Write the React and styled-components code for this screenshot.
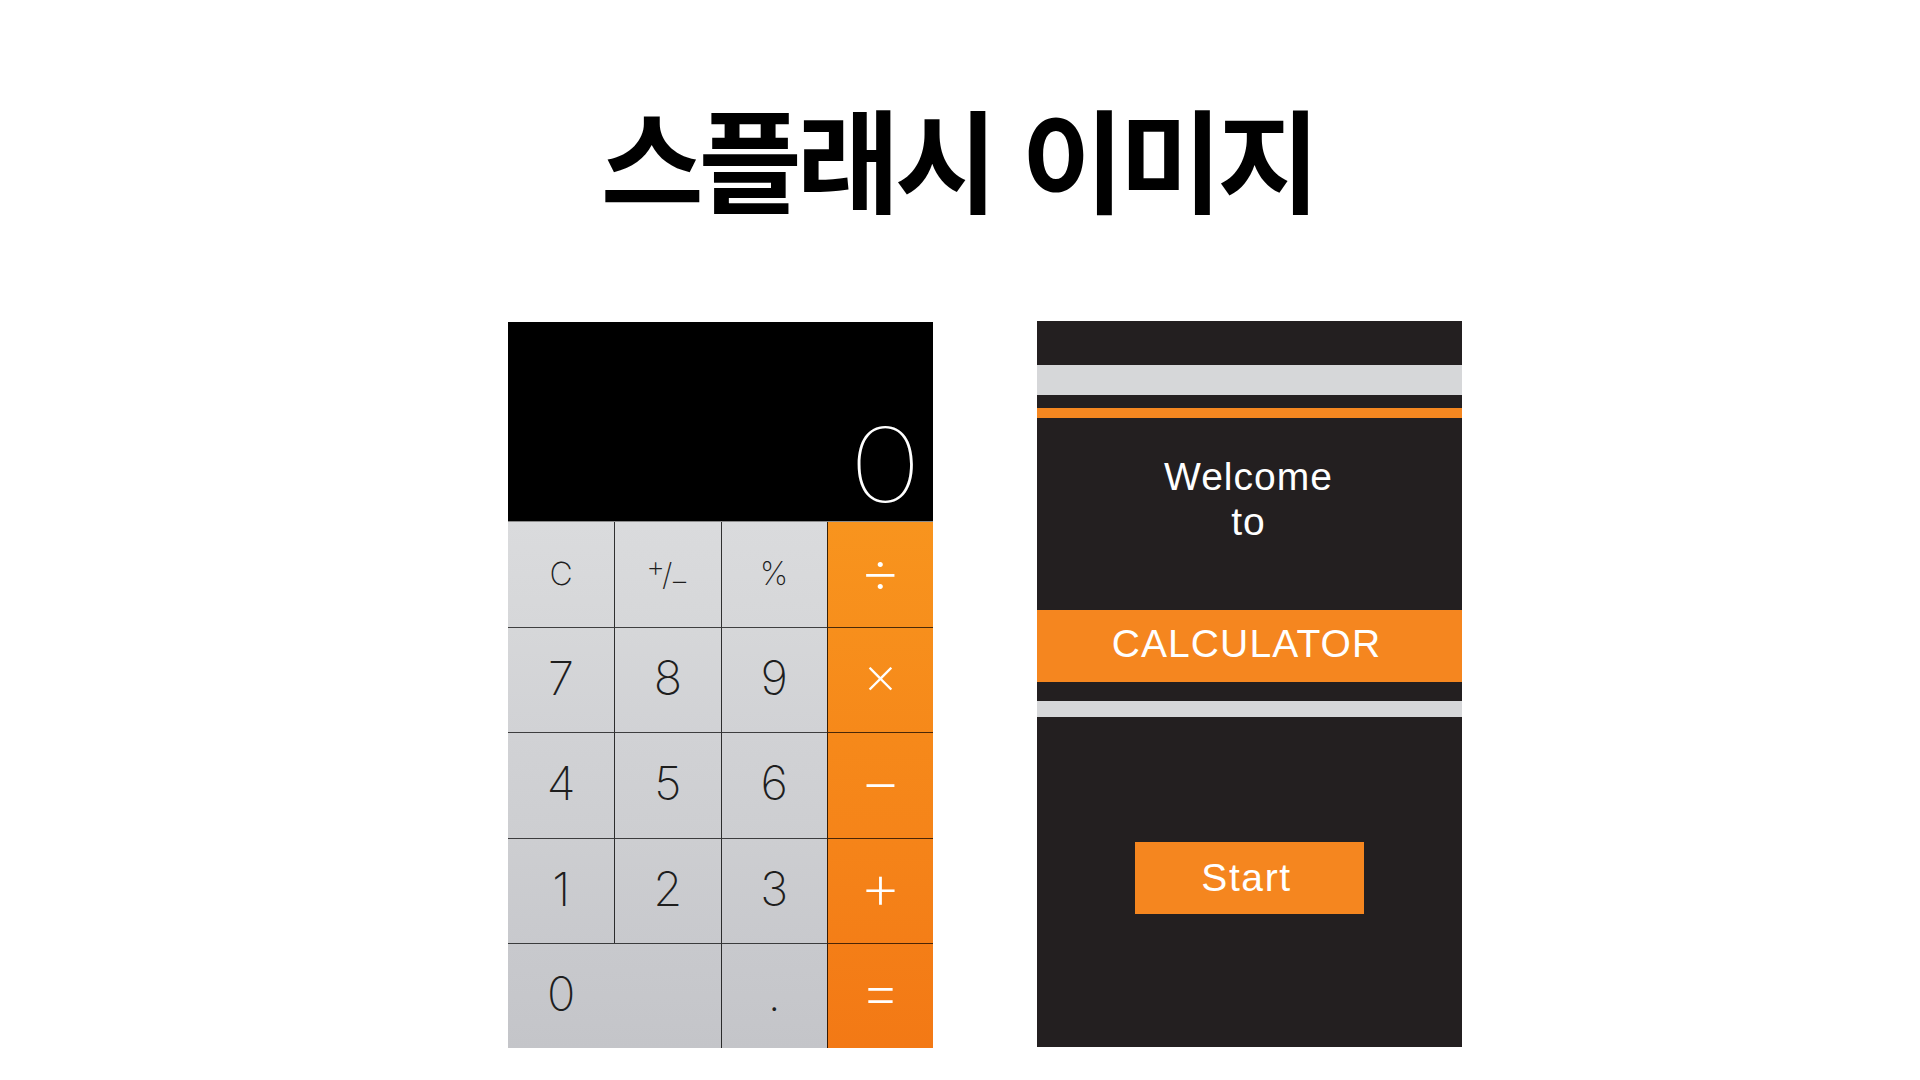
import React from "react";
import styled, { createGlobalStyle } from "styled-components";

const GRAY_TOP = [218, 219, 221];
const GRAY_BOTTOM = [196, 197, 201];
const ORANGE_TOP = [248, 148, 30];
const ORANGE_BOTTOM = [243, 121, 21];

const mix = (a, b, t) =>
  `rgb(${a.map((v, i) => Math.round(v + (b[i] - v) * t)).join(",")})`;

// each key gets its own slice of the one big gradient of the keypad
const keyBackground = (row, op) => {
  const [top, bottom] = op ? [ORANGE_TOP, ORANGE_BOTTOM] : [GRAY_TOP, GRAY_BOTTOM];
  return `linear-gradient(to bottom, ${mix(top, bottom, row / 5)}, ${mix(
    top,
    bottom,
    (row + 1) / 5
  )})`;
};

// big glyphs sit a little low in their line box, lift them back to the middle
const keyLift = (p) => (p.$op ? 10 : p.$size ? 1 : 5);

const KEYS = [
  [
    { label: "C", size: 32 },
    { label: "+/-", size: 30 },
    { label: "%", size: 32 },
    { label: "÷", op: true, size: 66 },
  ],
  [{ label: "7" }, { label: "8" }, { label: "9" }, { label: "×", op: true, size: 54 }],
  [{ label: "4" }, { label: "5" }, { label: "6" }, { label: "−", op: true, size: 65 }],
  [{ label: "1" }, { label: "2" }, { label: "3" }, { label: "+", op: true, size: 65 }],
  [{ label: "0", span: 2 }, { label: "." }, { label: "=", op: true, size: 65 }],
];

export default function App() {
  return (
    <>
      <GlobalStyle />
      <Page>
        <Title>스플래시 이미지</Title>
        <Screens>
          <Calculator>
            <Display>
              <Readout>0</Readout>
            </Display>
            <Keypad>
              {KEYS.map((row, r) => {
                let col = 0;
                return row.map((key) => {
                  const c = col;
                  col += key.span || 1;
                  return (
                    <Key
                      key={`${r}-${c}`}
                      $row={r}
                      $col={c}
                      $span={key.span}
                      $op={key.op}
                      $size={key.size}
                    >
                      {key.label === "+/-" ? (
                        <PlusMinus>
                          <Raised>+</Raised>
                          <Slash>/</Slash>
                          <Lowered>−</Lowered>
                        </PlusMinus>
                      ) : (
                        key.label
                      )}
                    </Key>
                  );
                });
              })}
            </Keypad>
          </Calculator>

          <Splash>
            <Stripe $h={30} $color="#d6d7d9" />
            <Stripe $h={10} $mt={13} $color="#f58720" />
            <Welcome>
              Welcome
              <br />
              to
            </Welcome>
            <Band>CALCULATOR</Band>
            <Stripe $h={16} $mt={19} $color="#d6d7d9" />
            <StartButton>Start</StartButton>
          </Splash>
        </Screens>
      </Page>
    </>
  );
}

const GlobalStyle = createGlobalStyle`
  html, body {
    margin: 0;
    padding: 0;
    background: #fff;
  }
  body {
    font-family: "Liberation Sans", Arial, sans-serif;
  }
`;

const Page = styled.div`
  width: 1920px;
  height: 1080px;
  box-sizing: border-box;
  padding-top: 100px;
  display: flex;
  flex-direction: column;
  align-items: center;
  overflow: hidden;
`;

const Title = styled.h1`
  margin: 0;
  padding-right: 4px;
  font-family: "Noto Sans CJK KR", "Noto Sans", sans-serif;
  font-weight: 700;
  font-size: 112px;
  line-height: 112px;
  letter-spacing: -5px;
  word-spacing: 8px;
  color: #000;
`;

const Screens = styled.div`
  display: flex;
  align-items: flex-start;
  gap: 104px;
  margin-top: 110px;
  padding-left: 50px;
`;

const Calculator = styled.div`
  width: 425px;
  display: flex;
  flex-direction: column;
`;

const Display = styled.div`
  height: 199px;
  box-sizing: border-box;
  padding: 0 11px 5px 0;
  background: #000;
  display: flex;
  align-items: flex-end;
  justify-content: flex-end;
  color: #fff;
  font-family: Inter, "Liberation Sans", sans-serif;
  font-weight: 100;
  font-size: 103px;
  line-height: 1;
`;

const Readout = styled.span`
  display: inline-block;
  transform: scaleX(1.2);
  transform-origin: right center;
`;

const Keypad = styled.div`
  height: 527px;
  box-sizing: border-box;
  border-top: 1px solid #8c8c8c;
  display: grid;
  grid-template-columns: repeat(4, 1fr);
  grid-template-rows: repeat(5, 1fr);
`;

const Key = styled.div`
  grid-column: span ${(p) => p.$span || 1};
  box-sizing: border-box;
  min-width: 0;
  min-height: 0;
  overflow: hidden;
  display: flex;
  align-items: center;
  justify-content: center;
  padding-right: ${(p) => (p.$span === 2 ? "50%" : "0")};
  padding-bottom: ${keyLift}px;
  background: ${(p) => keyBackground(p.$row, p.$op)};
  border-left: ${(p) => (p.$col > 0 ? "1px solid rgba(0, 0, 0, 0.78)" : "none")};
  border-top: ${(p) => (p.$row > 0 ? "1px solid rgba(0, 0, 0, 0.7)" : "none")};
  color: ${(p) => (p.$op ? "#fff" : "#1e1e1e")};
  font-family: Inter, "Liberation Sans", sans-serif;
  font-weight: 200;
  font-size: ${(p) => p.$size || 47}px;
  line-height: 1;
`;

const PlusMinus = styled.span`
  display: inline-flex;
  align-items: center;
`;

const Raised = styled.span`
  font-size: 29px;
  transform: translateY(-8px);
`;

const Slash = styled.span`
  font-size: 31px;
  margin: 0 -3px;
`;

const Lowered = styled.span`
  font-size: 31px;
  transform: translateY(5px);
`;

const Splash = styled.div`
  width: 425px;
  height: 726px;
  margin-top: -1px;
  box-sizing: border-box;
  padding-top: 44px;
  background: #231f20;
  display: flex;
  flex-direction: column;
  align-items: center;
  color: #fff;
  font-size: 39px;
`;

const Stripe = styled.div`
  align-self: stretch;
  height: ${(p) => p.$h}px;
  margin-top: ${(p) => p.$mt || 0}px;
  background: ${(p) => p.$color};
`;

const Welcome = styled.div`
  margin-top: 36px;
  padding-right: 2px;
  text-align: center;
  line-height: 45px;
  letter-spacing: 1px;
`;

const Band = styled.div`
  align-self: stretch;
  height: 72px;
  box-sizing: border-box;
  padding: 0 6px 5px 0;
  margin-top: 66px;
  background: #f5861f;
  display: flex;
  align-items: center;
  justify-content: center;
  letter-spacing: 1.1px;
`;

const StartButton = styled.div`
  width: 229px;
  height: 72px;
  box-sizing: border-box;
  padding-right: 6px;
  margin-top: 125px;
  background: #f5861f;
  display: flex;
  align-items: center;
  justify-content: center;
  letter-spacing: 1.6px;
`;
